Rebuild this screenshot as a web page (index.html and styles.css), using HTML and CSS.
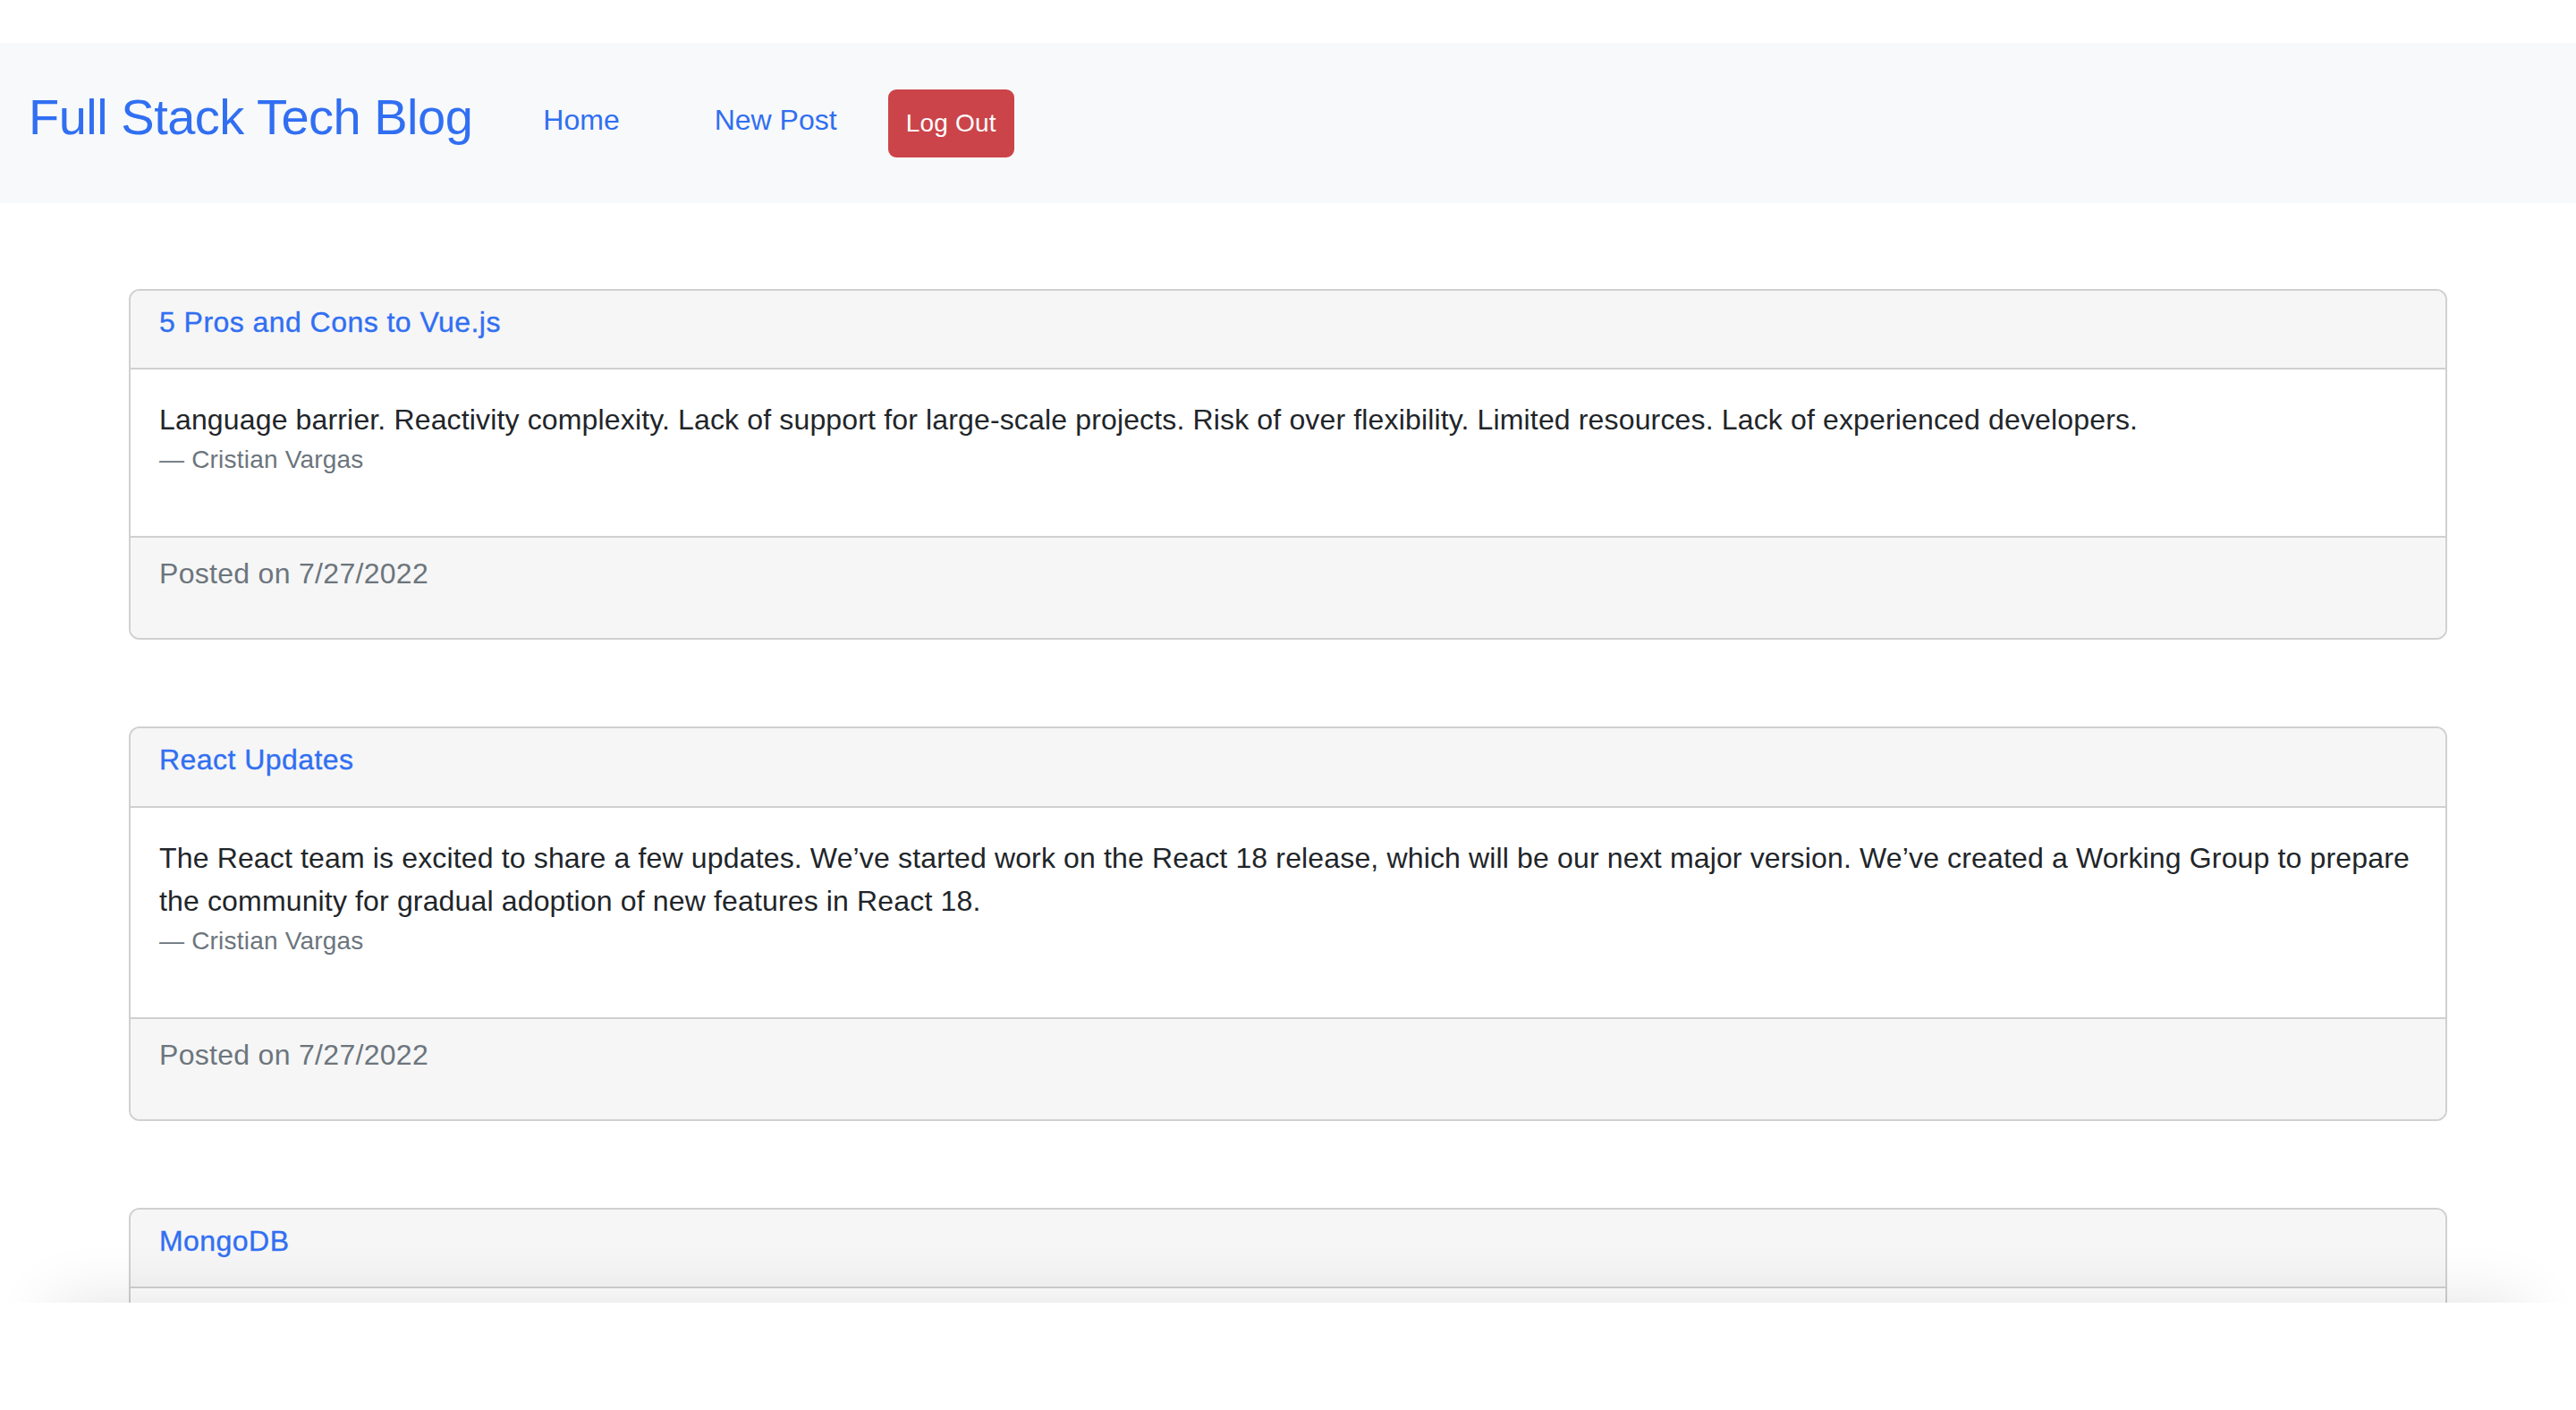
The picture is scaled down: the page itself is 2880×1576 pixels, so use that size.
FILE: index.html
```html
<!DOCTYPE html>
<html lang="en">
<head>
<meta charset="utf-8">
<title>Full Stack Tech Blog</title>
<link rel="stylesheet" href="styles.css">
</head>
<body>
<nav class="navbar">
  <a class="brand" href="#">Full Stack Tech Blog</a>
  <a class="nav-link nav-home" href="#">Home</a>
  <a class="nav-link nav-new" href="#">New Post</a>
  <button class="btn-logout" type="button">Log Out</button>
</nav>
<main class="posts">
  <article class="card">
    <div class="card-header"><h6 class="card-title"><a href="#">5 Pros and Cons to Vue.js</a></h6></div>
    <div class="card-body">
      <blockquote class="quote"><p>Language barrier. Reactivity complexity. Lack of support for large-scale projects. Risk of over flexibility. Limited resources. Lack of experienced developers.</p></blockquote>
      <p class="quote-footer">— Cristian Vargas</p>
    </div>
    <div class="card-footer"><p>Posted on 7/27/2022</p></div>
  </article>
  <article class="card">
    <div class="card-header"><h6 class="card-title"><a href="#">React Updates</a></h6></div>
    <div class="card-body">
      <blockquote class="quote"><p>The React team is excited to share a few updates. We’ve started work on the React 18 release, which will be our next major version. We’ve created a Working Group to prepare the community for gradual adoption of new features in React 18.</p></blockquote>
      <p class="quote-footer">— Cristian Vargas</p>
    </div>
    <div class="card-footer"><p>Posted on 7/27/2022</p></div>
  </article>
  <article class="card card-cut">
    <div class="card-header"><h6 class="card-title"><a href="#">MongoDB</a></h6></div>
    <div class="card-body card-body-empty"></div>
  </article>
</main>
<div class="shade"></div>
<div class="cover"></div>
</body>
</html>
```
FILE: styles.css
```css
html, body {
  margin: 0;
  padding: 0;
  background: #ffffff;
}
body {
  font-family: "Liberation Sans", Arial, sans-serif;
  font-size: 32px;
  line-height: 1.5;
  color: #212529;
  height: 1576px;
  overflow: hidden;
}
a {
  color: #316ff2;
  text-decoration: none;
}

/* navbar */
.navbar {
  margin-top: 48px;
  height: 179px;
  box-sizing: border-box;
  background: #f8f9fa;
  display: flex;
  align-items: center;
  padding: 0 0 0 32px;
}
.brand {
  font-size: 56px;
  line-height: 1.2;
  letter-spacing: -0.5px;
  padding-bottom: 14px;
  white-space: nowrap;
}
.nav-link {
  font-size: 32px;
  line-height: 48px;
  padding-bottom: 7px;
  white-space: nowrap;
}
.nav-home { margin-left: 79px; }
.nav-new { margin-left: 106px; }
.btn-logout {
  margin-left: 57px;
  font-family: "Liberation Sans", Arial, sans-serif;
  font-size: 28px;
  line-height: 42px;
  letter-spacing: 0.2px;
  color: #ffffff;
  background: #cb444a;
  border: 2px solid #cb444a;
  border-radius: 9px;
  padding: 15px 18px;
  cursor: pointer;
}

/* posts */
.posts {
  padding: 96px 144px 0;
  display: flex;
  flex-direction: column;
  gap: 97px;
}
.card {
  border: 2px solid #d0d0d0;
  border-radius: 12px;
  overflow: hidden;
  background: #ffffff;
}
.card-header {
  background: #f6f6f6;
  border-bottom: 2px solid #d0d0d0;
  padding: 16px 32px;
}
.card-title {
  margin: 0 0 16px;
  font-size: 32px;
  font-weight: 500;
  line-height: 1.2;
  letter-spacing: 0.45px;
}
.card-title a {
  -webkit-text-stroke: 0.35px #316ff2;
}
.card-body {
  padding: 32px;
}
.card-body-empty {
  height: 40px;
}
.quote {
  margin: 0;
}
.quote p {
  margin: 0 0 32px;
  letter-spacing: 0.15px;
}
.quote-footer {
  margin: -32px 0 32px;
  font-size: 28px;
  line-height: 42px;
  letter-spacing: 0.2px;
  color: #6c757d;
}
.card-footer {
  background: #f6f6f6;
  border-top: 2px solid #d0d0d0;
  padding: 16px 32px;
  color: #6c757d;
}
.card-footer p {
  margin: 0 0 32px;
  letter-spacing: 0.3px;
}

/* window bottom edge */
.shade {
  position: fixed;
  left: 60px;
  right: 60px;
  top: 1456px;
  height: 120px;
  background: #ffffff;
  box-shadow: 0 0 70px 0 rgba(0, 0, 0, 0.12);
}
.cover {
  position: fixed;
  left: 0;
  right: 0;
  top: 1456px;
  bottom: 0;
  background: #ffffff;
}
```
